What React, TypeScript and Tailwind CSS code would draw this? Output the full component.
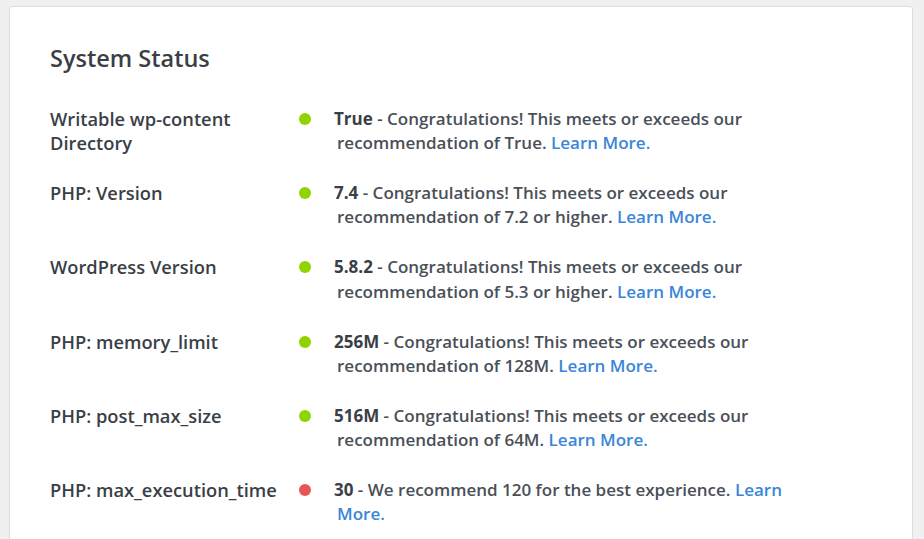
import React from "react";

type Row = {
  label: React.ReactNode;
  ok: boolean;
  value: string;
  text: string;
};

const rows: Row[] = [
  { label: <>Writable wp-content<br />Directory</>, ok: true, value: "True", text: "Congratulations! This meets or exceeds our recommendation of True." },
  { label: "PHP: Version", ok: true, value: "7.4", text: "Congratulations! This meets or exceeds our recommendation of 7.2 or higher." },
  { label: "WordPress Version", ok: true, value: "5.8.2", text: "Congratulations! This meets or exceeds our recommendation of 5.3 or higher." },
  { label: "PHP: memory_limit", ok: true, value: "256M", text: "Congratulations! This meets or exceeds our recommendation of 128M." },
  { label: "PHP: post_max_size", ok: true, value: "516M", text: "Congratulations! This meets or exceeds our recommendation of 64M." },
  { label: "PHP: max_execution_time", ok: false, value: "30", text: "We recommend 120 for the best experience." },
];

export default function App() {
  return (
    <div
      className="min-h-[539px] bg-[#f0f0f0] pl-[9px] pr-[11px] pt-[6px] overflow-hidden"
      style={{ fontFamily: '"Open Sans", sans-serif' }}
    >
      <div className="h-[560px] rounded-[3px] border border-[#dcdcdc] bg-white pl-[40px] pt-[36px] text-[#3a3f47]">
        <h2 className="text-[23.5px] leading-[30px] font-semibold">System Status</h2>
        <div className="mt-[34px] flex flex-col gap-[25.8px]">
          {rows.map((r, i) => (
            <div key={i} className="flex leading-[24.2px] font-semibold">
              <div className="w-[249px] shrink-0 text-[18.3px]">{r.label}</div>
              <div className="w-[35px] shrink-0 pt-[6px]">
                <span
                  className={
                    "block h-[12px] w-[12px] rounded-full " +
                    (r.ok ? "bg-[#8fd400]" : "bg-[#e65656]")
                  }
                />
              </div>
              <div className="w-[470px] pl-[3px] indent-[-3px] text-[17px] text-[#4a5058]">
                <span className="font-bold text-[#3a3f47]">{r.value}</span>
                <span> - {r.text} </span>
                <a className="text-[#3a86d9]">Learn More.</a>
              </div>
            </div>
          ))}
        </div>
      </div>
    </div>
  );
}
